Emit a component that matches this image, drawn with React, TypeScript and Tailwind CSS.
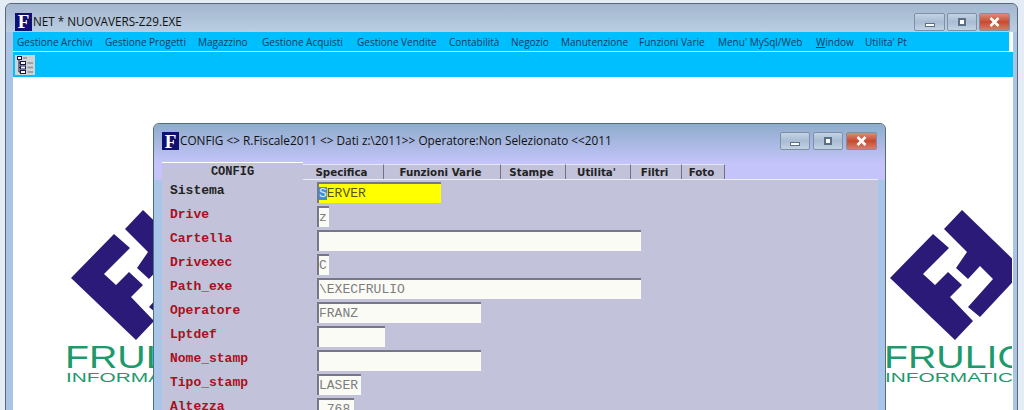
import React from "react";

const menu = [
  ["Gestione Archivi", "w-[88px]"],
  ["Gestione Progetti", "w-[93px]"],
  ["Magazzino", "w-[64px]"],
  ["Gestione Acquisti", "w-[95px]"],
  ["Gestione Vendite", "w-[92px]"],
  ["Contabilità", "w-[62px]"],
  ["Negozio", "w-[50px]"],
  ["Manutenzione", "w-[78px]"],
  ["Funzioni Varie", "w-[79px]"],
  ["Menu' MySql/Web", "w-[98px]"],
  ["Window", "w-[49px]"],
  ["Utilita' Pt", "w-[70px]"],
];

const tabs = [
  ["Specifica", "w-[81px]"],
  ["Funzioni Varie", "w-[117px]"],
  ["Stampe", "w-[65px]"],
  ["Utilita'", "w-[65px]"],
  ["Filtri", "w-[51px]"],
  ["Foto", "w-[43px]"],
];

const rows = [
  { label: "Sistema", value: "ERVER", w: "w-[124px]", dark: true },
  { label: "Drive", value: "z", w: "w-[12px]" },
  { label: "Cartella", value: "", w: "w-[324px]" },
  { label: "Drivexec", value: "C", w: "w-[12px]" },
  { label: "Path_exe", value: "\\EXECFRULIO", w: "w-[324px]" },
  { label: "Operatore", value: "FRANZ", w: "w-[164px]" },
  { label: "Lptdef", value: "", w: "w-[68px]" },
  { label: "Nome_stamp", value: "", w: "w-[164px]" },
  { label: "Tipo_stamp", value: "LASER", w: "w-[44px]" },
  { label: "Altezza", value: " 768", w: "w-[37px]" },
];

function Logo({ className }: { className: string }) {
  return (
    <div className={className}>
      <svg viewBox="-4 0 160 175" className="h-[175px] w-[160px]">
        <path fill="#2b1a78" d="M0 69 L43 25 L59 39 L33 65 L45 76 L58 63 L72 76 L60 88 L83 112 L65 131 Z" />
        <path fill="#2b1a78" d="M72 1 L134 61 L90 108 L78 98 L103 70 L90 57 L78 70 L66 59 L77 43 L54 20 Z" />
        <text x="-6" y="159" fontFamily="'Liberation Sans', sans-serif" fontSize="32" fill="#1c9a6c" textLength="144" lengthAdjust="spacingAndGlyphs">FRULIO</text>
        <text x="-5" y="173" fontFamily="'Liberation Sans', sans-serif" fontSize="12.5" fill="#1c9a6c" textLength="142" lengthAdjust="spacingAndGlyphs">INFORMATICA</text>
      </svg>
    </div>
  );
}

function AppIcon() {
  return (
    <span className="flex h-[18px] w-[17px] shrink-0 items-center justify-center bg-[#10106e] font-['Liberation_Serif',serif] text-[19px] font-bold leading-none text-white">
      F
    </span>
  );
}

function Caption({ big }: { big?: boolean }) {
  const base = "flex items-center justify-center rounded-[2px] border border-[#7d90a8]";
  return (
    <div className={big ? "flex gap-[2px]" : "flex gap-[3px]"}>
      <div className={`${base} h-[18px] ${big ? "w-[31px]" : "w-[30px]"} bg-gradient-to-b from-[#c4d3e4] via-[#a9bcd3] to-[#c2d2e3]`}>
        <span className="mt-[6px] h-[4px] w-[10px] border border-[#5b6f86] bg-white" />
      </div>
      <div className={`${base} h-[18px] w-[30px] bg-gradient-to-b from-[#c4d3e4] via-[#a9bcd3] to-[#c2d2e3]`}>
        <span className="h-[8px] w-[8px] border-2 border-[#5b6f86] bg-white" />
      </div>
      <div className={`${base} h-[18px] w-[31px] border-[#7b4a44] bg-gradient-to-b from-[#dd8b77] via-[#c64a30] to-[#d0806c]`}>
        <svg width="11" height="10" viewBox="0 0 11 10">
          <path d="M1.5 1 L9.5 9 M9.5 1 L1.5 9" stroke="#fff" strokeWidth="2.6" />
        </svg>
      </div>
    </div>
  );
}

function TreeIcon() {
  return (
    <svg width="20" height="20" viewBox="0 0 20 20" className="bg-[#cfd3d6]">
      <g fill="#fff" stroke="#15154a" strokeWidth="1">
        <rect x="2.5" y="1.5" width="4" height="3" />
        <rect x="5.5" y="6.5" width="5" height="3" />
        <rect x="5.5" y="11" width="5" height="3" />
        <rect x="5.5" y="15.5" width="5" height="3" />
      </g>
      <path d="M4 5V17H5.5M4 8H5.5M4 12.5H5.5" stroke="#15154a" fill="none" />
      <path d="M12.5 8H18M12.5 12.5H18M12.5 17H18M8 3H12" stroke="#8c9296" strokeWidth="1.5" />
    </svg>
  );
}

function Field({ row }: { row: (typeof rows)[number] }) {
  const base =
    "flex h-[21px] items-center overflow-hidden border-t-2 border-l-2 border-t-[#77778a] border-l-[#77778a] font-['Liberation_Mono',monospace] text-[13px] leading-none whitespace-pre";
  if (row.dark) {
    return (
      <div className={`${base} ${row.w} bg-[#ffff00] text-[#555500]`}>
        <span className="bg-[#3f8fdc] text-[#d9ecff]">S</span>
        {row.value}
      </div>
    );
  }
  return <div className={`${base} ${row.w} bg-[#fbfbf6] text-[#7d7d7d]`}>{row.value}</div>;
}

export default function App() {
  return (
    <div className="relative h-[410px] w-[1024px] overflow-hidden bg-[#e4ecf5] pt-[3px] pr-[6px] pl-[5px] font-['Open_Sans',sans-serif]">
      <div className="flex h-[420px] flex-col rounded-t-[6px] border border-[#59697a] bg-[#a9c4e4] pr-[4px] pl-[7px]">
        <div className="-mr-[4px] -ml-[7px] flex h-[28px] shrink-0 items-center justify-between rounded-t-[6px] bg-gradient-to-b from-[#a3b6cd] to-[#b9cde3] pt-[7px] pr-[7px] pl-[9px]">
          <div className="flex items-center gap-[1px] text-[11.7px] text-[#111]">
            <AppIcon />
            <span>NET * NUOVAVERS-Z29.EXE</span>
          </div>
          <Caption big />
        </div>
        <div className="flex h-[20px] shrink-0 bg-white pr-[4px]">
          <div className="flex flex-1 items-center border-b border-b-[#d7f4ff] bg-[#00bfff] pt-[1px] pl-[4px] text-[10px] text-[#0b3a60]">
            {menu.map(([name, w]) => (
              <span key={name} className={w}>
                {name === "Window" ? (
                  <>
                    <span className="underline">W</span>indow
                  </>
                ) : (
                  name
                )}
              </span>
            ))}
          </div>
        </div>
        <div className="flex h-[25px] shrink-0 items-center bg-[#00bfff] pl-[2px]">
          <TreeIcon />
        </div>
        <div className="flex-1 bg-white" />
      </div>

      <Logo className="absolute top-[209px] left-[67px] h-[175px] w-[160px] overflow-hidden" />
      <Logo className="absolute top-[209px] left-[886px] h-[175px] w-[126px] overflow-hidden" />

      <div className="absolute top-[123px] left-[153px] flex h-[300px] w-[733px] flex-col rounded-t-[6px] border border-[#4f7078] bg-[#a9c6e8] pr-[7px] pl-[8px]">
        <div className="-mr-[7px] -ml-[8px] flex h-[39px] shrink-0 items-start justify-between rounded-t-[6px] bg-gradient-to-b from-[#8eaccb] to-[#c4c4fa] pt-[8px] pr-[8px] pl-[8px]">
          <div className="flex items-center gap-[1px] text-[11.8px] text-[#111]">
            <AppIcon />
            <span>CONFIG &lt;&gt; R.Fiscale2011 &lt;&gt; Dati z:\2011&gt;&gt; Operatore:Non Selezionato &lt;&lt;2011</span>
          </div>
          <Caption />
        </div>
        <div className="-mr-[7px] -ml-[8px] flex h-[17px] shrink-0 bg-[#c4c4fa] pr-[7px] pl-[8px]">
          <div className="flex flex-1 items-end border-b border-b-[#eeeef6] font-['DejaVu_Sans',sans-serif] text-[10.3px] font-bold text-[#222]">
            <div className="-mb-[1px] flex h-[18px] w-[141px] items-center justify-center border-t border-t-white bg-[#c2c2da] font-['Liberation_Mono',monospace] text-[12px]">
              CONFIG
            </div>
            {tabs.map(([name, w]) => (
              <div
                key={name}
                className={`flex h-[15px] ${w} items-center justify-center border-t border-r border-t-[#e8e8f4] border-r-[#70708a] bg-[#c2c2da] pt-[2px] pr-[3px]`}
              >
                {name}
              </div>
            ))}
          </div>
        </div>
        <div className="flex-1 bg-[#c2c2da] pt-[2px] font-['Liberation_Mono',monospace] text-[13px] font-bold">
          {rows.map((row) => (
            <div key={row.label} className="flex h-[24px]">
              <span
                className={`w-[155px] pt-[2px] pl-[8px] leading-[14px] ${row.dark ? "text-[#222]" : "text-[#a8101c]"}`}
              >
                {row.label}
              </span>
              <div className="font-normal">
                <Field row={row} />
              </div>
            </div>
          ))}
        </div>
      </div>
    </div>
  );
}
